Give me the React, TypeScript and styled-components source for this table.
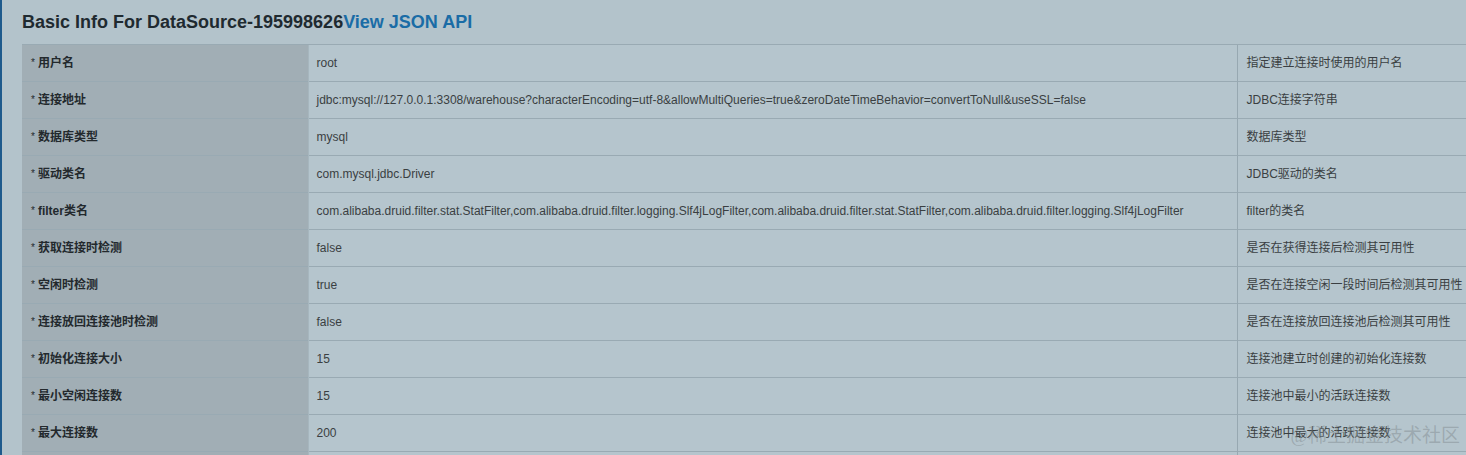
import * as React from "react";
import styled, { createGlobalStyle } from "styled-components";

const GlobalStyle = createGlobalStyle`
  html, body {
    margin: 0;
    padding: 0;
    overflow: hidden;
    background-color: #b3c3cb;
  }
  body {
    font-family: "Liberation Sans", Arial, "Noto Sans CJK SC", sans-serif;
    font-size: 12px;
    color: #333;
  }
`;

const Page = styled.div`
  position: relative;
  min-height: 455px;
  border-left: 2px solid #1e5a8c;
  padding: 11px 0 0 20px;
  box-sizing: border-box;
`;

const Title = styled.h3`
  margin: 0 0 11px;
  font-size: 18px;
  line-height: 22px;
  font-weight: bold;
  color: #1f2a30;
  white-space: nowrap;
`;

const ApiLink = styled.a`
  color: #1a6ca6;
  text-decoration: none;
`;

const InfoTable = styled.table`
  table-layout: fixed;
  width: 1455px;
  border-collapse: collapse;
  border-spacing: 0;
`;

const Row = styled.tr`
  border-top: 1px solid #99aab3;
`;

const Cell = styled.td<{ $kind: "label" | "value" | "desc" }>`
  padding: 8px 9px 8px ${(p) => (p.$kind === "value" ? "8px" : "9px")};
  line-height: 20px;
  white-space: nowrap;
  overflow: hidden;
  vertical-align: middle;
  background-color: ${(p) => (p.$kind === "label" ? "#a1aeb5" : "#b5c5cd")};
  font-weight: ${(p) => (p.$kind === "label" ? "bold" : "normal")};
  color: ${(p) => (p.$kind === "label" ? "#23292d" : "#3a3f42")};
  border-left: ${(p) => (p.$kind === "label" ? "none" : "1px solid #a6b6be")};
  border-top: ${(p) => (p.$kind === "label" ? "none" : "1px solid #99aab3")};

  &:nth-child(3) {
    border-left-color: #97a8b1;
  }
`;

const Star = styled.span`
  font-weight: normal;
  font-size: 10px;
  margin-right: 3px;
  vertical-align: top;
`;

const Watermark = styled.div`
  position: absolute;
  right: 6px;
  top: 425px;
  font-family: "Liberation Serif", "Noto Sans CJK SC", serif;
  font-size: 19px;
  line-height: 22px;
  color: rgba(125, 135, 140, 0.45);
  pointer-events: none;
`;

const rows: [string, string, string][] = [
  ["用户名", "root", "指定建立连接时使用的用户名"],
  [
    "连接地址",
    "jdbc:mysql://127.0.0.1:3308/warehouse?characterEncoding=utf-8&allowMultiQueries=true&zeroDateTimeBehavior=convertToNull&useSSL=false",
    "JDBC连接字符串",
  ],
  ["数据库类型", "mysql", "数据库类型"],
  ["驱动类名", "com.mysql.jdbc.Driver", "JDBC驱动的类名"],
  [
    "filter类名",
    "com.alibaba.druid.filter.stat.StatFilter,com.alibaba.druid.filter.logging.Slf4jLogFilter,com.alibaba.druid.filter.stat.StatFilter,com.alibaba.druid.filter.logging.Slf4jLogFilter",
    "filter的类名",
  ],
  ["获取连接时检测", "false", "是否在获得连接后检测其可用性"],
  ["空闲时检测", "true", "是否在连接空闲一段时间后检测其可用性"],
  ["连接放回连接池时检测", "false", "是否在连接放回连接池后检测其可用性"],
  ["初始化连接大小", "15", "连接池建立时创建的初始化连接数"],
  ["最小空闲连接数", "15", "连接池中最小的活跃连接数"],
  ["最大连接数", "200", "连接池中最大的活跃连接数"],
  ["查询超时时间", "0", "查询超时时间"],
];

const App: React.FC = () => {
  return (
    <Page>
      <GlobalStyle />
      <Title>
        Basic Info For DataSource-195998626
        <ApiLink href="#">View JSON API</ApiLink>
      </Title>
      <InfoTable>
        <colgroup>
          <col style={{ width: 286 }} />
          <col style={{ width: 929 }} />
          <col style={{ width: 240 }} />
        </colgroup>
        <tbody>
          {rows.map(([label, value, desc]) => (
            <Row key={label}>
              <Cell $kind="label">
                <Star>*</Star>
                {label}
              </Cell>
              <Cell $kind="value">{value}</Cell>
              <Cell $kind="desc">{desc}</Cell>
            </Row>
          ))}
        </tbody>
      </InfoTable>
      <Watermark>@稀土掘金技术社区</Watermark>
    </Page>
  );
};

export default App;
